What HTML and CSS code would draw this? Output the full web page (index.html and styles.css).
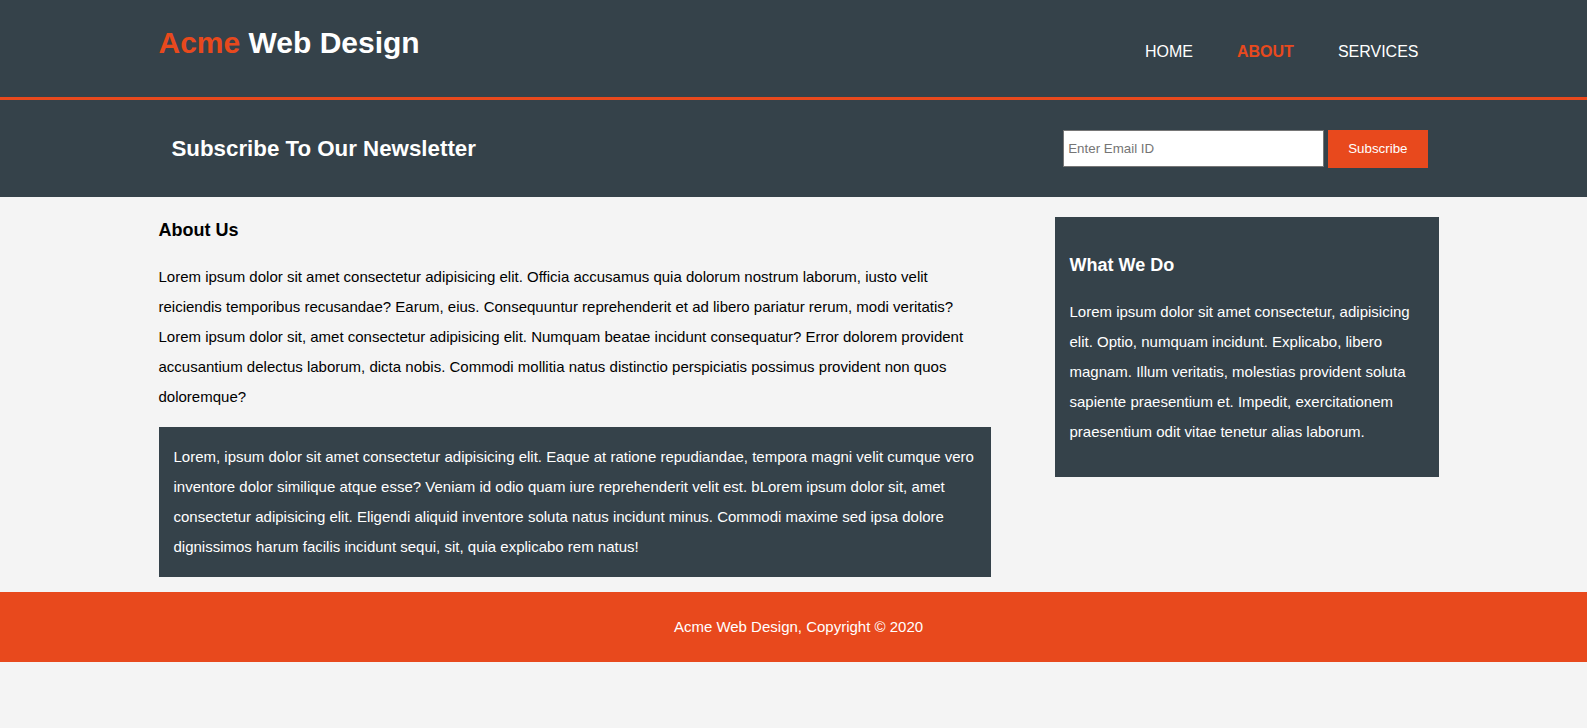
FILE: index.html
```html
<!DOCTYPE html>
<html lang="en">
<head>
<meta charset="utf-8">
<title>Acme Web Design | About</title>
<link rel="stylesheet" href="styles.css">
</head>
<body>
<header class="site-header">
  <div class="wrap header-inner">
    <h1 class="brand"><span class="highlight">Acme</span> Web Design</h1>
    <nav class="nav">
      <ul class="nav-list">
        <li><a href="#">Home</a></li>
        <li class="current"><a href="#">About</a></li>
        <li><a href="#">Services</a></li>
      </ul>
    </nav>
  </div>
</header>

<section class="newsletter">
  <div class="wrap newsletter-inner">
    <h1 class="newsletter-title">Subscribe To Our Newsletter</h1>
    <form class="newsletter-form">
      <input class="email-input" type="email" placeholder="Enter Email ID">
      <button class="button-1" type="submit">Subscribe</button>
    </form>
  </div>
</section>

<section class="wrap content">
  <article class="main-col">
    <h3 class="section-title">About Us</h3>
    <p class="text">Lorem ipsum dolor sit amet consectetur adipisicing elit. Officia accusamus quia dolorum nostrum laborum, iusto velit reiciendis temporibus recusandae? Earum, eius. Consequuntur reprehenderit et ad libero pariatur rerum, modi veritatis? Lorem ipsum dolor sit, amet consectetur adipisicing elit. Numquam beatae incidunt consequatur? Error dolorem provident accusantium delectus laborum, dicta nobis. Commodi mollitia natus distinctio perspiciatis possimus provident non quos doloremque?</p>
    <p class="text dark">Lorem, ipsum dolor sit amet consectetur adipisicing elit. Eaque at ratione repudiandae, tempora magni velit cumque vero inventore dolor similique atque esse? Veniam id odio quam iure reprehenderit velit est. bLorem ipsum dolor sit, amet consectetur adipisicing elit. Eligendi aliquid inventore soluta natus incidunt minus. Commodi maxime sed ipsa dolore dignissimos harum facilis incidunt sequi, sit, quia explicabo rem natus!</p>
  </article>
  <aside class="sidebar">
    <div class="sidebar-box">
      <h3 class="section-title">What We Do</h3>
      <p class="text">Lorem ipsum dolor sit amet consectetur, adipisicing elit. Optio, numquam incidunt. Explicabo, libero magnam. Illum veritatis, molestias provident soluta sapiente praesentium et. Impedit, exercitationem praesentium odit vitae tenetur alias laborum.</p>
    </div>
  </aside>
</section>

<footer class="site-footer">
  <p class="footer-text">Acme Web Design, Copyright &copy; 2020</p>
</footer>
</body>
</html>
```

FILE: styles.css
```css
* {
  box-sizing: border-box;
}

html, body {
  margin: 0;
  padding: 0;
}

body {
  background: #f4f4f4;
  font-family: "Liberation Sans", Arial, Helvetica, sans-serif;
  font-size: 15px;
  line-height: 1.5;
  color: #000;
}

.wrap {
  width: 1270px;
  margin: 0 auto;
}

/* Header */
.site-header {
  background: #35424a;
  color: #fff;
  height: 100px;
  border-bottom: 3px solid #e8491d;
}

.header-inner {
  display: flex;
  justify-content: space-between;
  align-items: flex-start;
}

.brand {
  margin: 0;
  padding-top: 20px;
  font-size: 30px;
  line-height: 45px;
  font-weight: bold;
}

.highlight {
  color: #e8491d;
}

.nav {
  padding-top: 40px;
  margin-right: 10px;
}

.nav-list {
  list-style: none;
  margin: 0;
  padding: 0;
  display: flex;
  gap: 44px;
}

.nav-list a {
  color: #fff;
  text-decoration: none;
  text-transform: uppercase;
  font-size: 16px;
  line-height: 24px;
}

.nav-list .current a {
  color: #e8491d;
  font-weight: bold;
}

/* Newsletter */
.newsletter {
  background: #35424a;
  color: #fff;
  height: 97px;
}

.newsletter-inner {
  height: 100%;
  display: flex;
  align-items: center;
  justify-content: space-between;
}

.newsletter-title {
  margin: 0;
  padding-left: 13px;
  font-size: 22.3px;
  line-height: 33px;
  font-weight: bold;
}

.newsletter-form {
  display: flex;
  align-items: center;
  gap: 4px;
  margin-right: 1px;
}

.email-input {
  width: 261px;
  height: 37px;
  padding: 4px;
  border: 1px solid #767676;
  background: #fff;
  font-family: "Liberation Sans", Arial, sans-serif;
  font-size: 13.33px;
  color: #000;
}

.email-input::placeholder {
  color: #757575;
}

.button-1 {
  height: 38px;
  background: #e8491d;
  border: 0;
  padding: 0 20px;
  color: #fff;
  font-family: "Liberation Sans", Arial, sans-serif;
  font-size: 13.33px;
}

/* Content */
.content {
  display: grid;
  grid-template-columns: 832px 384px;
  column-gap: 64px;
  align-items: start;
}

.section-title {
  margin: 20px 0 18px;
  font-size: 18px;
  line-height: 27px;
  font-weight: bold;
}

.text {
  margin: 0;
  font-size: 15px;
  line-height: 30px;
}

.dark {
  margin-top: 15px;
  padding: 15px;
  background: #35424a;
  color: #fff;
}

.sidebar {
  margin-top: 20px;
}

.sidebar-box {
  background: #35424a;
  color: #fff;
  padding: 15px 15px 30px;
}

/* Footer */
.site-footer {
  margin-top: 15px;
  background: #e8491d;
  color: #fff;
  padding: 20px 0 20px 10px;
  text-align: center;
}

.footer-text {
  margin: 0;
  font-size: 15px;
  line-height: 30px;
}
```
